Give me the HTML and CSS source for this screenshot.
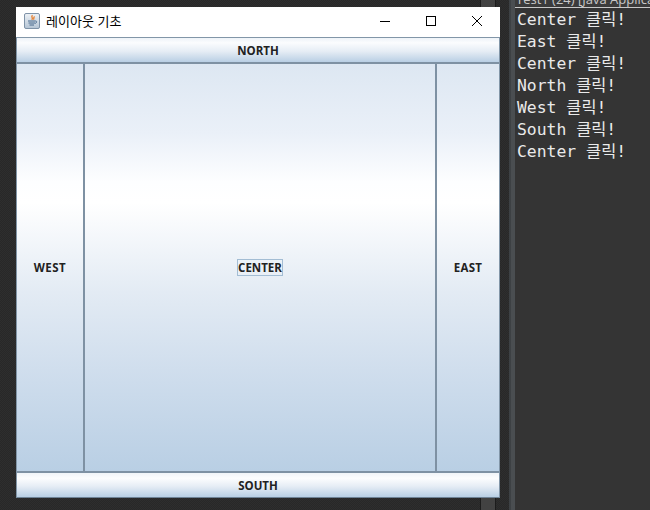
FILE: index.html
```html
<!DOCTYPE html>
<html lang="ko">
<head>
<meta charset="utf-8">
<title>레이아웃 기초</title>
<link rel="stylesheet" href="styles.css">
</head>
<body>
<div class="desktop">
  <div class="behind"></div>
  <div class="window">
    <div class="titlebar">
      <svg class="app-icon" width="16" height="16" viewBox="0 0 16 16">
        <defs><linearGradient id="ib" x1="0" y1="0" x2="0" y2="1"><stop offset="0" stop-color="#eef2f6"/><stop offset="1" stop-color="#b4c4d4"/></linearGradient></defs>
        <rect x="0.5" y="0.5" width="15" height="15" rx="1.5" fill="url(#ib)" stroke="#7f93a8"/>
        <path d="M8.5 2.2c-2.2 1.7 1.2 2.5-.7 4.6M10.6 3.6c-1.6 1-.2 1.9-1.1 3.1" fill="none" stroke="#e8761c" stroke-width="1.2"/>
        <path d="M4 8h7M4.5 10h6.5M5.5 12h4.5" stroke="#46698c" stroke-width="1"/>
        <path d="M11 8c2.2 -.5 2.4 1.8 0 2.4" fill="none" stroke="#46698c" stroke-width=".9"/>
      </svg>
      <span class="title">레이아웃 기초</span>
      <div class="controls">
        <svg width="46" height="30" viewBox="0 0 46 30"><path d="M18 14.5h10" stroke="#000"/></svg>
        <svg width="46" height="30" viewBox="0 0 46 30"><rect x="18.5" y="9.5" width="9" height="9" fill="none" stroke="#000"/></svg>
        <svg width="46" height="30" viewBox="0 0 46 30"><path d="M18 9l10 10M28 9l-10 10" stroke="#000" fill="none"/></svg>
      </div>
    </div>
    <div class="frame">
      <button class="btn north">NORTH</button>
      <div class="middle">
        <button class="btn side west">WEST</button>
        <button class="btn side center"><span class="focus">CENTER</span></button>
        <button class="btn side east">EAST</button>
      </div>
      <button class="btn south">SOUTH</button>
    </div>
  </div>
</div>
<div class="gutter"></div>
<div class="console">
  <div class="console-head"><span>Test1 (24) [Java Application]</span></div>
  <div class="console-body">
    <div>Center 클릭!</div>
    <div>East 클릭!</div>
    <div>Center 클릭!</div>
    <div>North 클릭!</div>
    <div>West 클릭!</div>
    <div>South 클릭!</div>
    <div>Center 클릭!</div>
  </div>
</div>
</body>
</html>
```
FILE: styles.css
```css
* { box-sizing: border-box; }
html, body { margin: 0; height: 100%; }
body {
  width: 650px;
  height: 510px;
  overflow: hidden;
  display: flex;
  background: #2b2b2b;
}
.desktop {
  position: relative;
  width: 509px;
  height: 510px;
  padding: 7px 0 0 16px;
  background: repeating-conic-gradient(#282828 0 25%, #2e2e2e 0 50%) 0 0 / 2px 2px;
}
.behind {
  position: absolute;
  left: 480px;
  top: 0;
  width: 16px;
  height: 510px;
  background: #424242;
  border-left: 1px solid #1c1c1c;
  border-right: 1px solid #1c1c1c;
}
.window {
  position: relative;
  width: 484px;
  height: 491px;
  display: flex;
  flex-direction: column;
  background: #fff;
}
.titlebar {
  height: 30px;
  flex: none;
  display: flex;
  align-items: center;
  padding: 0 0 2px 8px;
  background: #fff;
}
.app-icon { flex: none; }
.title {
  margin: -2px 0 0 6px;
  font: 13px "Noto Sans CJK KR", sans-serif;
  color: #000;
}
.controls { margin: 2px 0 0 auto; display: flex; }
.controls svg { display: block; }
.frame {
  flex: 1;
  min-height: 0;
  display: flex;
  flex-direction: column;
  border: 1px solid #6f8396;
  border-top-color: #8296a8;
  border-left-color: #8296a8;
  border-right-color: #8296a8;
}
.btn {
  display: flex;
  align-items: center;
  justify-content: center;
  margin: 0;
  padding: 0;
  border: 0;
  font: bold 11.5px "Open Sans", "Liberation Sans", sans-serif;
  color: #222;
}
.north, .south { flex: none; height: 26px; }
.north {
  border-bottom: 2px solid #7e91a3;
  background: linear-gradient(to bottom, #eef3f8 0, #fbfcfe 20%, #e6edf5 55%, #b9cfe4 100%);
}
.south {
  border-top: 2px solid #7e91a3;
  background: linear-gradient(to bottom, #f0f4f8 0, #fcfdfe 22%, #e6edf5 55%, #b9cfe4 100%);
}
.middle {
  flex: 1;
  min-height: 0;
  display: flex;
}
.side {
  background: linear-gradient(to bottom, #dde7f2 0, #eaf0f8 17%, #fdfeff 29%, #fff 34%, #e3ebf4 56%, #cddcec 78%, #b9cfe4 100%);
}
.west { width: 68px; border-right: 2px solid #7e91a3; letter-spacing: .5px; }
.center { flex: 1; }
.east { width: 64px; border-left: 2px solid #7e91a3; letter-spacing: .3px; }
.focus {
  display: block;
  border: 1px solid #a3bdd4;
  line-height: 15px;
}
.gutter {
  width: 6px;
  height: 510px;
  background: linear-gradient(to right, #3d4144 0 2px, #4a4e51 2px);
}
.console {
  flex: 1;
  min-width: 0;
  height: 510px;
  background: #343434;
  display: flex;
  flex-direction: column;
}
.console-head {
  height: 8px;
  flex: none;
  overflow: hidden;
  border-bottom: 1px solid #c8c8c8;
  background: #3b3b3b;
}
.console-head span {
  display: block;
  margin: -9px 0 0 1px;
  font: 13px/16px "Open Sans", "Liberation Sans", sans-serif;
  color: #c8c8c8;
  white-space: nowrap;
}
.console-body {
  padding: 1px 0 0 2px;
  font: 16.4px/22px "DejaVu Sans Mono", "Noto Sans CJK KR", monospace;
  color: #eaeaea;
}
```
